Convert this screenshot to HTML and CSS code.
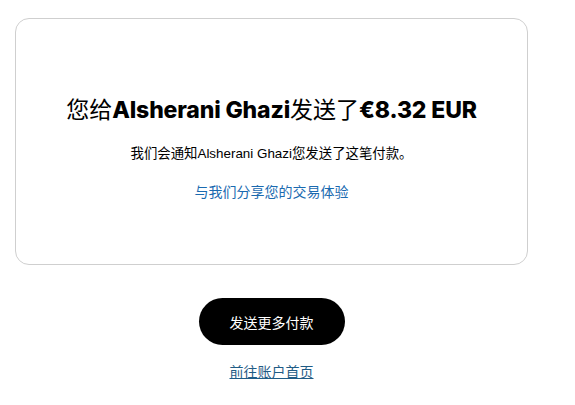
FILE: index.html
```html
<!DOCTYPE html>
<html lang="zh-CN">
<head>
<meta charset="utf-8">
<title>付款已发送</title>
<link rel="stylesheet" href="styles.css">
</head>
<body>
<main class="page">
  <section class="card">
    <h1 class="title">您给<b>Alsherani Ghazi</b>发送了<b>€8.32 EUR</b></h1>
    <p class="note">我们会通知Alsherani Ghazi您发送了这笔付款。</p>
    <a class="share" href="#">与我们分享您的交易体验</a>
  </section>
  <div class="actions">
    <a class="btn" href="#">发送更多付款</a>
    <a class="home" href="#">前往账户首页</a>
  </div>
</main>
</body>
</html>
```
FILE: styles.css
```css
* { box-sizing: border-box; }
html, body { margin: 0; padding: 0; background: #fff; }
body {
  font-family: "Liberation Sans", "Noto Sans CJK SC", sans-serif;
  color: #000;
}
.page {
  width: 513px;
  margin: 18px 0 0 15px;
  display: flex;
  flex-direction: column;
  align-items: center;
}
.card {
  width: 100%;
  height: 247px;
  border: 1px solid #cfcfcf;
  border-radius: 14px;
  display: flex;
  flex-direction: column;
  align-items: center;
  padding-top: 72px;
}
.title {
  margin: 0;
  font-family: "Noto Sans CJK SC", sans-serif;
  font-size: 23px;
  font-weight: 400;
  line-height: 34px;
  white-space: nowrap;
}
.title b {
  font-family: "Inter", "Noto Sans CJK SC", sans-serif;
  font-weight: 800;
  letter-spacing: -0.15px;
}
.note {
  margin: 18px 0 0;
  font-size: 13.4px;
  line-height: 18px;
}
.share {
  margin-top: 20px;
  font-size: 14px;
  line-height: 18px;
  color: #1a6ab0;
  text-decoration: none;
}
.actions {
  margin-top: 33px;
  display: flex;
  flex-direction: column;
  align-items: center;
}
.btn {
  width: 146px;
  height: 47px;
  border-radius: 24px;
  background: #000;
  color: #fff;
  font-size: 14px;
  display: flex;
  align-items: center;
  justify-content: center;
  text-decoration: none;
}
.home {
  margin-top: 18px;
  font-size: 14px;
  line-height: 18px;
  color: #1f5c86;
  text-decoration: underline;
}
```
